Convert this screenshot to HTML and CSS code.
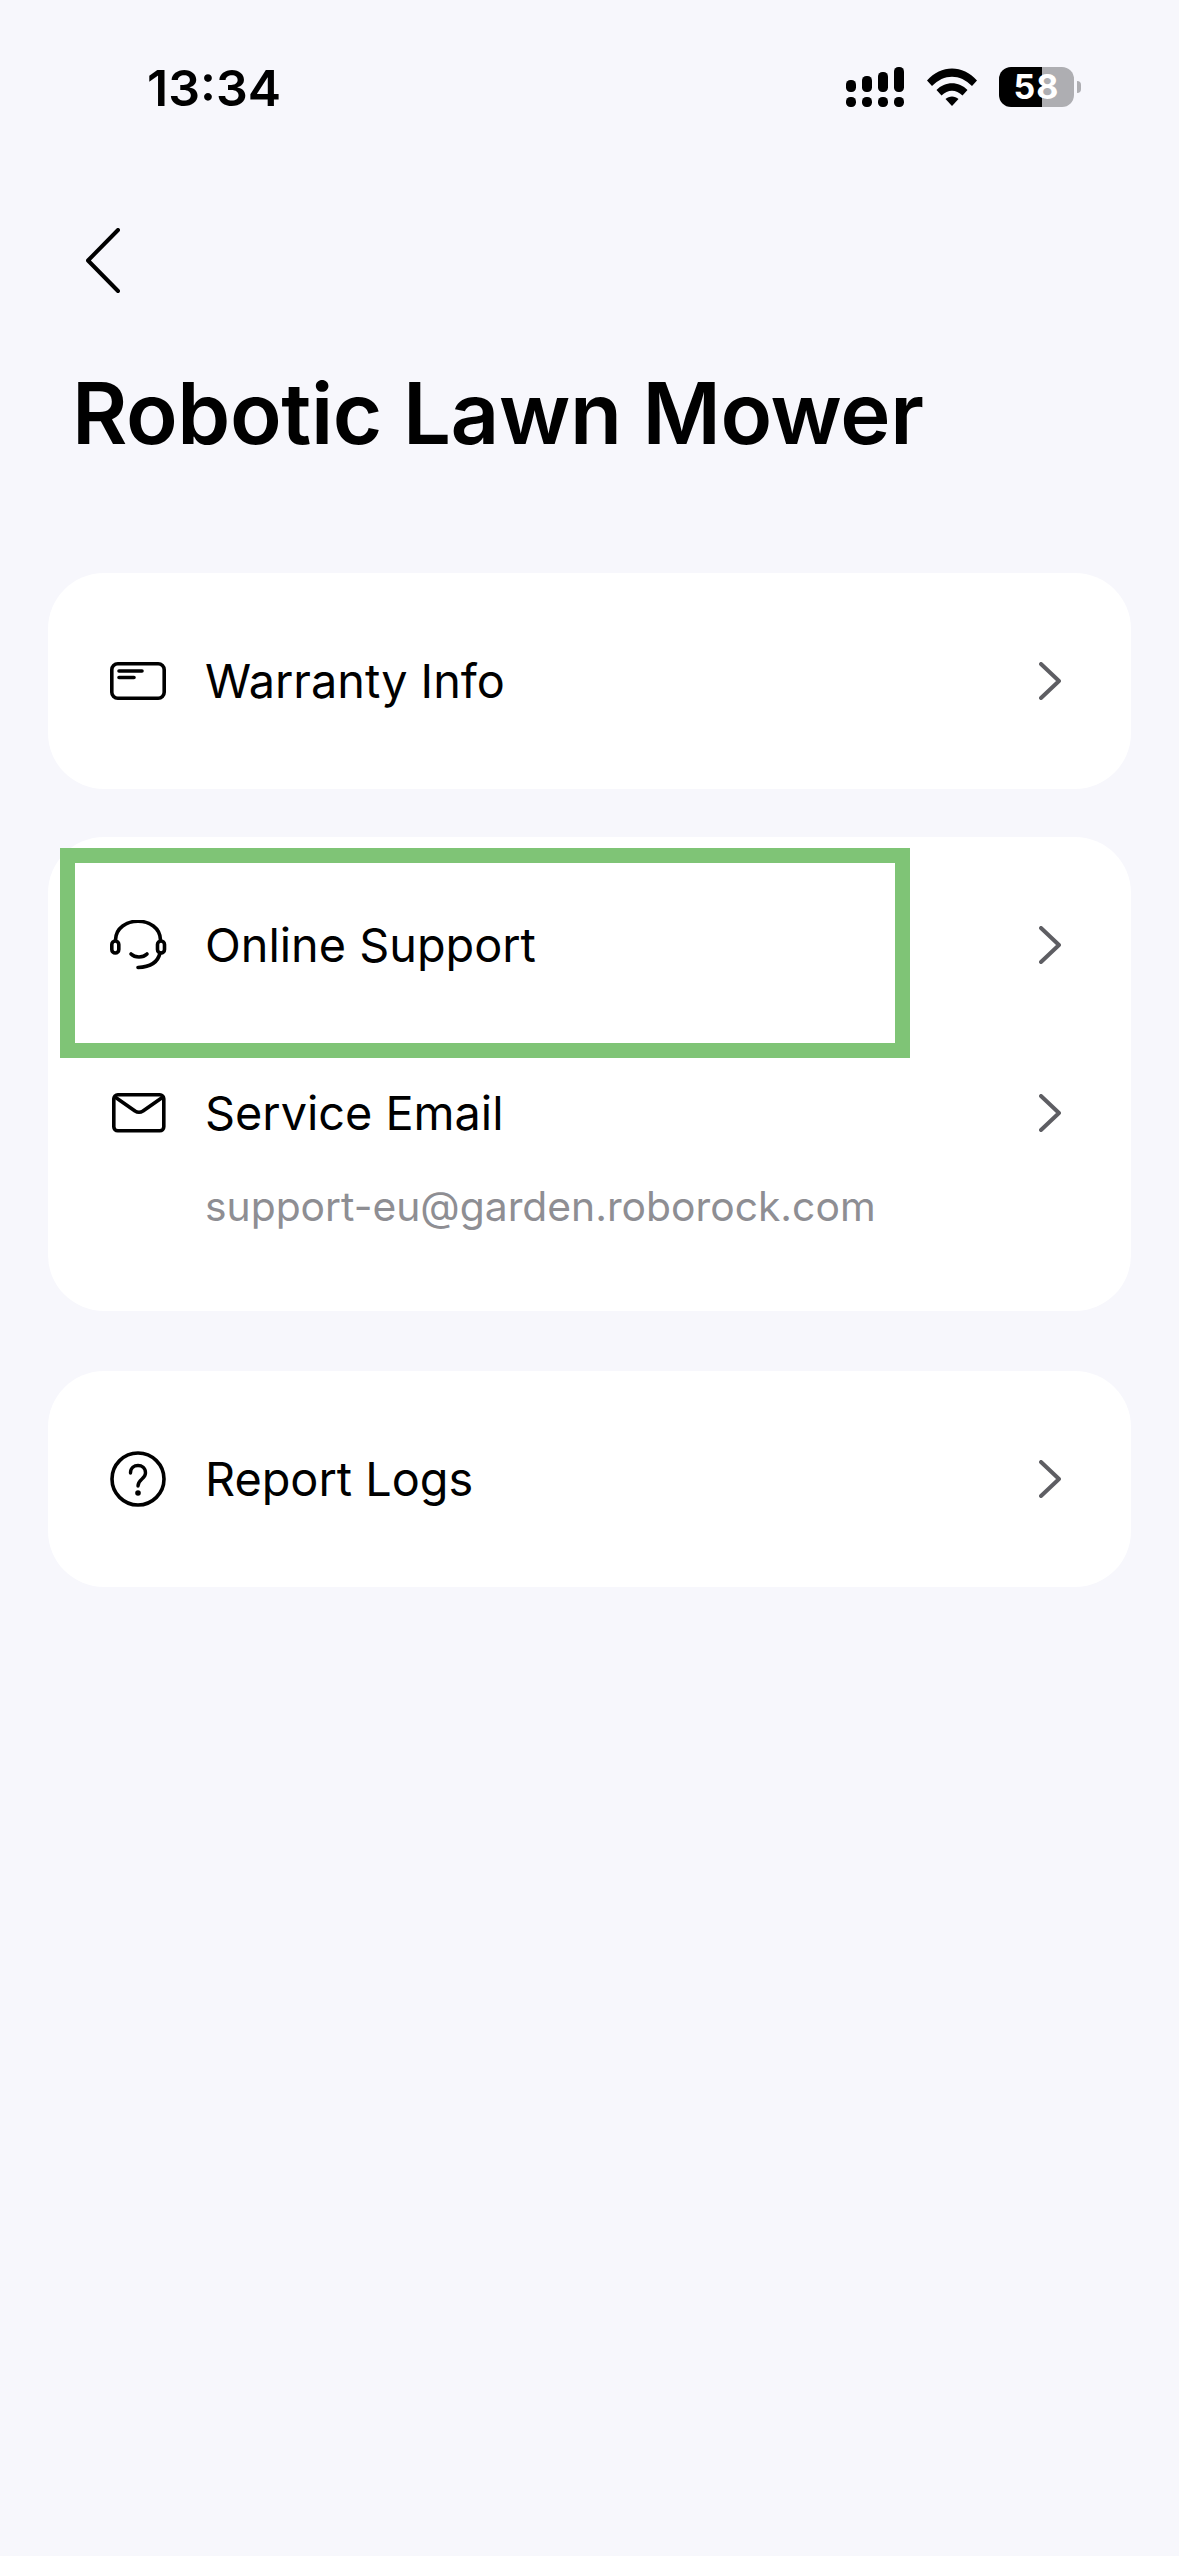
FILE: index.html
```html
<!DOCTYPE html>
<html lang="en">
<head>
  <meta charset="UTF-8">
  <meta name="viewport" content="width=device-width, initial-scale=1.0">
  <title>Robotic Lawn Mower</title>
  <link rel="stylesheet" href="styles.css">
</head>
<body>
  <div class="status-bar">
    <span class="time">13:34</span>
    <div class="status-icons">
      <svg class="signal" width="58" height="40" viewBox="0 0 58 40">
        <rect x="0" y="13" width="10" height="12" rx="4.5"/>
        <rect x="16" y="9" width="10" height="16" rx="4.5"/>
        <rect x="32" y="5" width="10" height="20" rx="4.5"/>
        <rect x="48" y="0" width="10" height="25" rx="4.5"/>
        <rect x="0" y="30" width="10" height="10" rx="4.5"/>
        <rect x="16" y="30" width="10" height="10" rx="4.5"/>
        <rect x="32" y="30" width="10" height="10" rx="4.5"/>
        <rect x="48" y="30" width="10" height="10" rx="4.5"/>
      </svg>
      <svg class="wifi" width="50" height="38" viewBox="0 0 50 38">
        <path d="M0 12.5 C14 -3.5 36 -3.5 50 12.5 L45 18 C33 5.5 17 5.5 5 18 Z"/>
        <path d="M9.5 22 C18 13 32 13 40.5 22 L35.5 27.5 C29 21 21 21 14.5 27.5 Z"/>
        <path d="M18.5 31 C22 27.5 28 27.5 31.5 31 L25 38 Z"/>
      </svg>
      <div class="battery">
        <div class="battery-body"><span class="battery-text">58</span></div>
        <div class="battery-nub"></div>
      </div>
    </div>
  </div>

  <div class="nav">
    <svg width="34" height="66" viewBox="0 0 34 66">
      <path d="M32 2 L2 32.500 L32 63" fill="none" stroke="#000" stroke-width="4" stroke-linecap="round" stroke-linejoin="round"/>
    </svg>
  </div>

  <h1 class="title">Robotic Lawn Mower</h1>

  <div class="cards">
    <div class="card">
      <div class="row">
        <div class="icon-box">
          <svg width="56" height="38" viewBox="0 0 56 38">
            <rect x="1.800" y="1.800" width="52.400" height="34.400" rx="6" class="line"/>
            <path d="M9 9 H32 M9 15.500 H24" class="line"/>
          </svg>
        </div>
        <span class="label">Warranty Info</span>
        <svg class="chevron" width="22" height="38" viewBox="0 0 22 38">
          <path d="M2 2 L20 19 L2 36"/>
        </svg>
      </div>
    </div>

    <div class="card card-support">
      <div class="row">
        <div class="icon-box">
          <svg width="58" height="50" viewBox="0 0 58 50">
            <path d="M5.500 20 C6 -5 50 -5 50.500 20" class="line"/>
            <rect x="1.800" y="21" width="7" height="12" rx="3.500" class="line"/>
            <rect x="47.500" y="21" width="7" height="12" rx="3.500" class="line"/>
            <path d="M21 34 C25 38 33 38 37 34" class="line"/>
            <path d="M50 33 C48 42 40 47 28 47.500" class="line"/>
          </svg>
        </div>
        <span class="label">Online Support</span>
        <svg class="chevron" width="22" height="38" viewBox="0 0 22 38">
          <path d="M2 2 L20 19 L2 36"/>
        </svg>
      </div>
      <div class="row row-email">
        <div class="icon-box">
          <svg width="56" height="40" viewBox="0 0 56 40">
            <rect x="3.800" y="1.800" width="50" height="36" rx="4" class="line"/>
            <path d="M5 4 L25 18 Q29 20.500 33 18 L53 4" class="line"/>
          </svg>
        </div>
        <span class="label">Service Email</span>
        <svg class="chevron" width="22" height="38" viewBox="0 0 22 38">
          <path d="M2 2 L20 19 L2 36"/>
        </svg>
      </div>
      <div class="email">support-eu@garden.roborock.com</div>
      <div class="highlight"></div>
    </div>

    <div class="card card-logs">
      <div class="row">
        <div class="icon-box">
          <svg width="56" height="56" viewBox="0 0 56 56">
            <circle cx="28" cy="28" r="26" class="line"/>
            <path d="M20.500 22 C20.500 12 35.500 12 35.500 22 C35.500 28 28 28 28 35" class="line thin"/>
            <circle cx="28" cy="42" r="2.800" class="dot"/>
          </svg>
        </div>
        <span class="label">Report Logs</span>
        <svg class="chevron" width="22" height="38" viewBox="0 0 22 38">
          <path d="M2 2 L20 19 L2 36"/>
        </svg>
      </div>
    </div>
  </div>
</body>
</html>
```

FILE: styles.css
```css
html, body {
  margin: 0;
  padding: 0;
}
body {
  width: 1179px;
  height: 2556px;
  background-color: #f7f7fc;
  color: #000;
  font-family: Inter, "Noto Sans", sans-serif;
  overflow: hidden;
}
.status-bar {
  display: flex;
  justify-content: space-between;
  align-items: center;
  height: 40px;
  padding: 67px 98px 0 147px;
}
.time {
  margin-top: 1px;
  font-size: 50px;
  font-weight: 600;
  line-height: 40px;
}
.status-icons {
  display: flex;
  align-items: center;
  gap: 23px;
}
.wifi {
  margin-right: -1px;
}
.battery {
  display: flex;
  align-items: center;
  gap: 3px;
}
.battery-body {
  display: flex;
  justify-content: center;
  align-items: center;
  width: 75px;
  height: 40px;
  border-radius: 12px;
  background: linear-gradient(to right, #000 57%, #aeaeb2 57%);
}
.battery-text {
  color: #fff;
  font-size: 34px;
  font-weight: 700;
  line-height: 40px;
  letter-spacing: 1px;
}
.battery-nub {
  width: 4px;
  height: 12px;
  border-radius: 0 6px 6px 0;
  background-color: #aeaeb2;
}
.nav {
  display: flex;
  padding: 121px 0 0 86px;
}
.title {
  margin: 67px 0 0 72px;
  font-size: 85px;
  font-weight: 600;
  line-height: 105px;
  letter-spacing: -0.4px;
}
.cards {
  display: flex;
  flex-direction: column;
  gap: 48px;
  margin: 0 48px;
  padding-top: 107px;
}
.card {
  position: relative;
  background-color: #fff;
  border-radius: 56px;
}
.card-support {
  height: 474px;
}
.card-logs {
  margin-top: 12px;
}
.row {
  display: flex;
  align-items: center;
  height: 216px;
  padding: 0 70px 0 62px;
}
.row-email {
  height: 122px;
  margin-top: -1px;
}
.icon-box {
  display: flex;
  flex: none;
  width: 95px;
}
.label {
  flex: 1;
  font-size: 46.800px;
  font-weight: 430;
  line-height: 56px;
}
.chevron {
  flex: none;
  fill: none;
  stroke: #5e5e63;
  stroke-width: 4;
  stroke-linecap: round;
  stroke-linejoin: round;
}
.line {
  fill: none;
  stroke: #000;
  stroke-width: 3.600;
  stroke-linecap: round;
  stroke-linejoin: round;
}
.thin {
  stroke-width: 3.400;
}
.dot {
  fill: #000;
}
.email {
  margin-top: 7px;
  padding-left: 157px;
  color: #8e8e93;
  font-size: 40.800px;
  line-height: 50px;
}
.highlight {
  position: absolute;
  top: 11px;
  left: 12px;
  width: 820px;
  height: 180px;
  border: 15px solid #7fc476;
}
```
